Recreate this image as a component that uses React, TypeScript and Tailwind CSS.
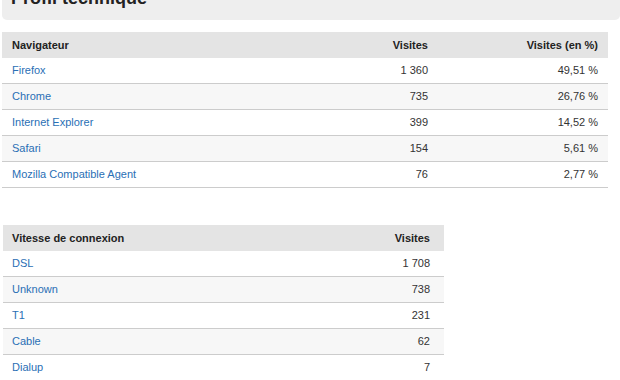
import React from "react";

const browsers = [
  ["Firefox", "1 360", "49,51 %"],
  ["Chrome", "735", "26,76 %"],
  ["Internet Explorer", "399", "14,52 %"],
  ["Safari", "154", "5,61 %"],
  ["Mozilla Compatible Agent", "76", "2,77 %"],
];

const speeds = [
  ["DSL", "1 708"],
  ["Unknown", "738"],
  ["T1", "231"],
  ["Cable", "62"],
  ["Dialup", "7"],
];

export default function App() {
  return (
    <div
      className="w-[620px] h-[380px] overflow-hidden bg-white text-[11px] text-[#333]"
      style={{ fontFamily: '"Liberation Sans", Arial, sans-serif' }}
    >
      <div className="ml-[2px] mt-[-20px] h-[40px] rounded-b-[5px] bg-[#eeeeee] pl-[9px] flex items-end">
        <h1 className="text-[18px] font-bold text-[#222] leading-none mb-[13px]">Profil technique</h1>
      </div>

      <div className="ml-[2px] mt-[12px] w-[606px]">
        <div className="flex h-[26px] items-center bg-[#e4e4e4] font-bold text-[#222]">
          <div className="flex-1 pl-[10px]">Navigateur</div>
          <div className="w-[120px] text-right">Visites</div>
          <div className="w-[180px] pr-[10px] text-right">Visites (en %)</div>
        </div>
        {browsers.map(([name, v, p], i) => (
          <div
            key={name}
            className={`flex h-[26px] items-center border-b border-[#cccccc] ${i % 2 === 1 ? "bg-[#f7f7f7]" : "bg-white"}`}
          >
            <div className="flex-1 pl-[10px] text-[#2a6fb5]">{name}</div>
            <div className="w-[120px] text-right">{v}</div>
            <div className="w-[180px] pr-[10px] text-right">{p}</div>
          </div>
        ))}
      </div>

      <div className="ml-[3px] mt-[37px] w-[441px]">
        <div className="flex h-[26px] items-center bg-[#e4e4e4] font-bold text-[#222]">
          <div className="flex-1 pl-[9px]">Vitesse de connexion</div>
          <div className="w-[120px] pr-[14px] text-right">Visites</div>
        </div>
        {speeds.map(([name, v], i) => (
          <div
            key={name}
            className={`flex h-[26px] items-center border-b border-[#cccccc] ${i % 2 === 1 ? "bg-[#f7f7f7]" : "bg-white"}`}
          >
            <div className="flex-1 pl-[9px] text-[#2a6fb5]">{name}</div>
            <div className="w-[120px] pr-[14px] text-right">{v}</div>
          </div>
        ))}
      </div>
    </div>
  );
}
